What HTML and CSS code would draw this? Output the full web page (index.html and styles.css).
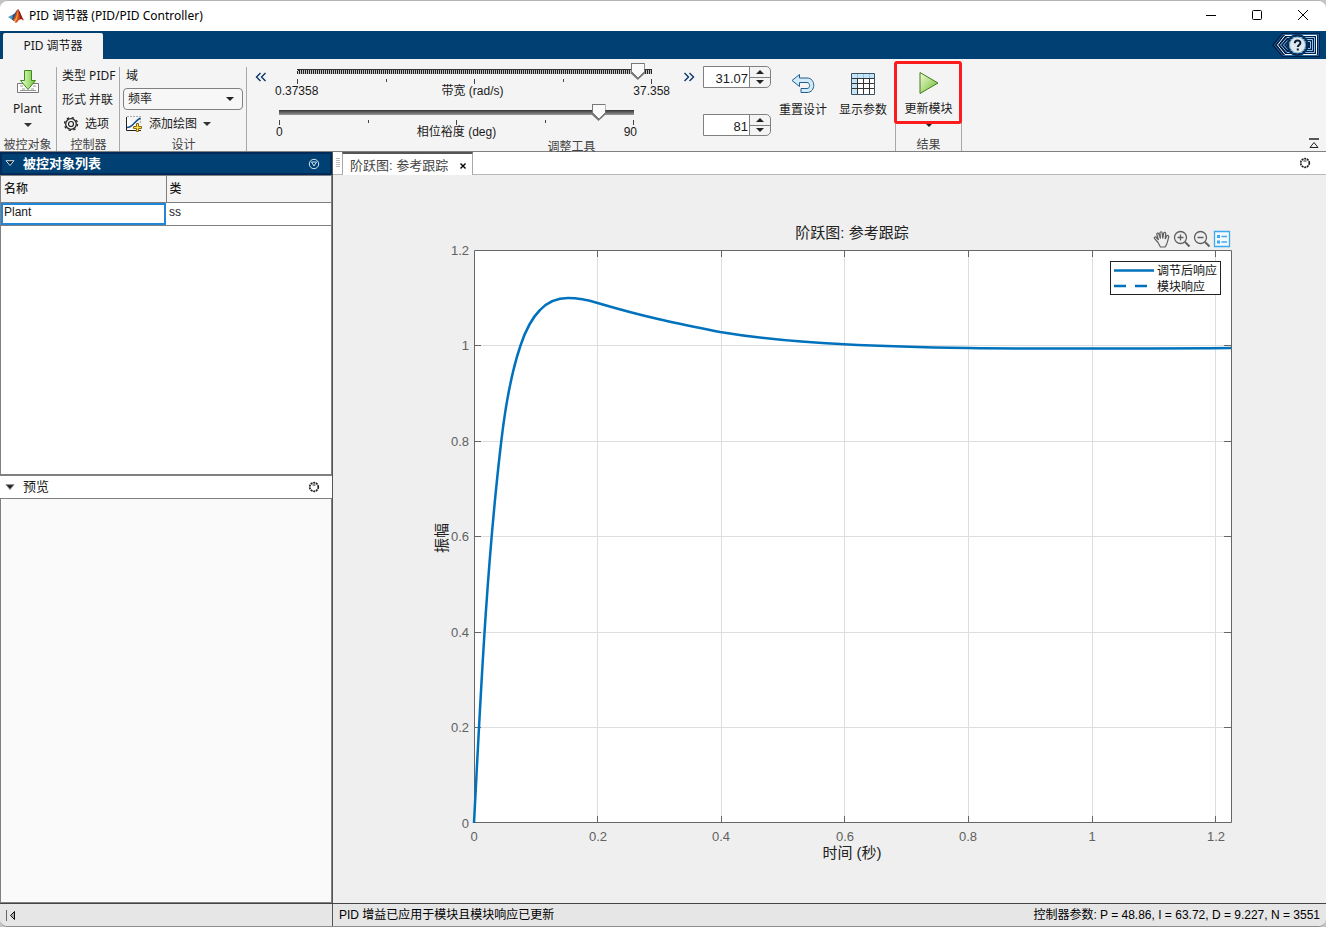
FILE: index.html
```html
<!DOCTYPE html>
<html lang="zh-CN">
<head>
<meta charset="utf-8">
<title>PID 调节器 (PID/PID Controller)</title>
<link rel="stylesheet" href="styles.css">
</head>
<body>
<div class="window">
  <header class="titlebar">
    <svg class="logo" width="16" height="16" viewBox="0 0 16 16" aria-hidden="true">
      <path d="M0 9 5 6.5 7.5 8 4.5 12z" fill="#4d9dc4"/>
      <path d="M5 6.5C7 6 8 3 9.5 1L8.5 9 5.5 13 4 11.5z" fill="#2a4f7c"/>
      <path d="M4.5 12C7 11 8 3 10 1c2 2 3.5 8 6 11.500C13.500 11 12 10.500 10.500 12.500 9.500 14 8.500 15 7.500 15 7 13 6 11.500 4.500 12z" fill="#d6501f"/>
      <path d="M10 1c2 2 3.500 8 6 11.500-2-1.500-3.500-2-4.500-.5C12 8 11 4 10 1z" fill="#8e1f14"/>
      <path d="M9.500 3c.8 4 0 8-2 11L6.500 12c2-2 2.500-6 3-9z" fill="#f5a13a"/>
    </svg>
    <h1 class="title">PID 调节器 (PID/PID Controller)</h1>
    <button class="win-btn" aria-label="最小化"><svg width="12" height="12" viewBox="0 0 12 12"><path d="M1 5.500h10" stroke="#000"/></svg></button>
    <button class="win-btn" aria-label="最大化"><svg width="12" height="12" viewBox="0 0 12 12"><rect x="1.500" y=".5" width="9" height="9" rx="1" fill="none" stroke="#000"/></svg></button>
    <button class="win-btn" aria-label="关闭"><svg width="12" height="12" viewBox="0 0 12 12"><path d="M1 0l10 10M11 0 1 10" stroke="#000"/></svg></button>
  </header>

  <nav class="tabstrip">
    <button class="ribbon-tab">PID 调节器</button>
    <button class="help" aria-label="帮助">
      <svg width="52" height="26" viewBox="0 0 52 26">
        <path d="M2 13 12 1H50V25H12z" fill="#012049"/>
        <path d="M4.500 13 13 2.500H48.500V23.500H13z" fill="none" stroke="#2b6ba5"/>
        <path d="M7.500 13 15 3.500H46.500V22.500H15z" fill="#012049" stroke="#fff"/>
        <path d="M10.500 13 17 5.500H44.500V20.500H17z" fill="none" stroke="#8fc1e8"/>
        <path d="M13.500 13 18.500 7.500H42.500V18.500H18.500z" fill="none" stroke="#8fc1e8"/>
        <path d="M16.500 13 20 9.500H40.500V16.500H20z" fill="none" stroke="#8fc1e8"/>
        <circle cx="27.500" cy="13" r="10" fill="none" stroke="#01305f" stroke-width="2"/>
        <circle cx="27.500" cy="13" r="8" fill="#dfe9f0" stroke="#7fa6c4"/>
        <path d="M24.800 11.300c0-3.800 5.600-3.600 5.600-.4 0 2-2.600 2.100-2.600 4M27.800 16.600v2" fill="none" stroke="#0b1c33" stroke-width="2"/>
      </svg>
    </button>
  </nav>

  <section class="ribbon" aria-label="工具条">
    <div class="group group-plant">
      <button class="big-btn">
        <svg class="big-icon" width="24" height="26" viewBox="0 0 24 26">
          <defs><linearGradient id="gr" x1="0" x2="1"><stop offset="0" stop-color="#f2ffe0"/><stop offset="1" stop-color="#6cc52c"/></linearGradient></defs>
          <path d="M1.500 14.500h21v9h-21z" fill="#fff" stroke="#777"/>
          <path d="M4 17h3M6 20h3M17 17h3M15 20h3M4 21.500h16" stroke="#999"/>
          <path d="M8.500 1.500h7v10h4L12 20.500 4.500 11.500h4z" fill="url(#gr)" stroke="#3f8a1d"/>
        </svg>
        <span>Plant</span>
        <svg class="caret" width="8" height="4" viewBox="0 0 8 4"><path d="M0 0h8L4 4z" fill="#333"/></svg>
      </button>
      <div class="group-label">被控对象</div>
    </div>

    <div class="group group-controller">
      <div class="rows">
        <div class="row">类型 PIDF</div>
        <div class="row">形式 并联</div>
        <button class="row row-btn">
          <svg width="16" height="16" viewBox="0 0 16 16" fill="none" stroke="#222"><circle cx="8" cy="8" r="5.300" stroke-width="1.300"/><circle cx="8" cy="8" r="2.500" stroke-width="1.200"/><circle cx="8" cy="8" r="6.500" stroke-width="1.300" stroke-dasharray="2.300 2.800"/></svg>
          <span>选项</span>
        </button>
      </div>
      <div class="group-label">控制器</div>
    </div>

    <div class="group group-design">
      <div class="rows">
        <label class="row" for="domain">域</label>
        <div class="select-wrap">
          <select id="domain"><option>频率</option></select>
          <svg class="caret" width="8" height="4" viewBox="0 0 8 4"><path d="M0 0h8L4 4z" fill="#222"/></svg>
        </div>
        <button class="row row-btn">
          <svg width="17" height="16" viewBox="0 0 17 16"><path d="M.5 1v13.500H15" fill="#fff" stroke="#222"/><path d="M1 .5h13.500V8" fill="none" stroke="#aaa" stroke-dasharray="2 1"/><path d="M1 11.500C7 11.500 8 5 14.500 2" fill="none" stroke="#15508c" stroke-width="1.500"/><path d="M10.500 7.500h2v3h3v2h-3v3h-2v-3h-3v-2h3z" fill="#ffdc4a" stroke="#8a6a08"/></svg>
          <span>添加绘图</span>
          <svg class="caret" width="8" height="4" viewBox="0 0 8 4"><path d="M0 0h8L4 4z" fill="#333"/></svg>
        </button>
      </div>
      <div class="group-label">设计</div>
    </div>

    <div class="group group-tuning">
      <div class="tuning">
        <button class="chevron" aria-label="减小范围"><svg width="12" height="10" viewBox="0 0 12 10"><path d="M5.500 1 1.500 5l4 4M10.500 1l-4 4 4 4" fill="none" stroke="#0b3568" stroke-width="1.400"/></svg></button>
        <div class="sliders">
          <div class="slider slider-bandwidth">
            <input type="range" id="bandwidth" min="0" max="100" value="96">
            <div class="ticks"><i></i><i></i><i></i><i></i><i></i></div>
            <div class="scale"><span>0.37358</span><label for="bandwidth">带宽 (rad/s)</label><span>37.358</span></div>
          </div>
          <div class="slider slider-phase">
            <input type="range" id="phase" min="0" max="90" value="81">
            <div class="ticks"><i></i><i></i><i></i><i></i><i></i></div>
            <div class="scale"><span>0</span><label for="phase">相位裕度 (deg)</label><span>90</span></div>
          </div>
        </div>
        <button class="chevron" aria-label="增大范围"><svg width="12" height="10" viewBox="0 0 12 10"><path d="M1.500 1l4 4-4 4M6.500 1l4 4-4 4" fill="none" stroke="#0b3568" stroke-width="1.400"/></svg></button>
        <div class="spinners">
          <div class="spinner">
            <input type="number" step="any" value="31.07" aria-label="带宽 (rad/s)">
            <div class="steps">
              <button aria-label="增加"><svg width="8" height="4" viewBox="0 0 8 4"><path d="M0 4h8L4 0z" fill="#222"/></svg></button>
              <button aria-label="减少"><svg width="8" height="4" viewBox="0 0 8 4"><path d="M0 0h8L4 4z" fill="#222"/></svg></button>
            </div>
          </div>
          <div class="spinner">
            <input type="number" value="81" aria-label="相位裕度 (deg)">
            <div class="steps">
              <button aria-label="增加"><svg width="8" height="4" viewBox="0 0 8 4"><path d="M0 4h8L4 0z" fill="#222"/></svg></button>
              <button aria-label="减少"><svg width="8" height="4" viewBox="0 0 8 4"><path d="M0 0h8L4 4z" fill="#222"/></svg></button>
            </div>
          </div>
        </div>
        <button class="big-btn">
          <svg class="big-icon" width="24" height="26" viewBox="0 0 24 26"><path d="M1 10.500 8.500 4.500v3.500H16c9 0 9 14.500 0 14.500h-6v-4h6c3.500 0 3.500-6 0-6H8.500v4z" fill="#d3ebf8" stroke="#1f5f8e"/></svg>
          <span>重置设计</span>
        </button>
        <button class="big-btn">
          <svg class="big-icon" width="24" height="26" viewBox="0 0 24 26"><path d="M.5 3.500h23v21H.5z" fill="#fff"/><path d="M1 4h22v4H1zM1 8h5v16H1z" fill="#c4e4f7"/><path d="M.5 8.500h23M.5 13.500h23M.5 18.500h23M6.500 8v17M12.500 8v17M18.500 8v17" fill="none" stroke="#333"/><path d="M6.500 4v4M12.500 4v4M18.500 4v4" stroke="#8cc0e0"/><path d="M.5 3.500h23v21H.5z" fill="none" stroke="#3b5262"/></svg>
          <span>显示参数</span>
        </button>
      </div>
      <div class="group-label">调整工具</div>
    </div>

    <div class="group group-result">
      <button class="big-btn">
        <svg class="big-icon" width="20" height="24" viewBox="0 0 20 24"><defs><linearGradient id="pl" x1="0" y1="0" x2="1" y2="1"><stop offset="0" stop-color="#f4ffd8"/><stop offset="1" stop-color="#69b82b"/></linearGradient></defs><path d="M1 1.500 19 12 1 22.500z" fill="url(#pl)" stroke="#447a20"/></svg>
        <span>更新模块</span>
        <svg class="caret" width="8" height="4" viewBox="0 0 8 4"><path d="M0 0h8L4 4z" fill="#222"/></svg>
      </button>
      <div class="group-label">结果</div>
      <div class="highlight"></div>
    </div>

    <button class="collapse" aria-label="收起工具条"><svg width="10" height="10" viewBox="0 0 10 10"><path d="M0 1h10" stroke="#222" stroke-width="1.500"/><path d="M5 4.500 9 9.500H1z" fill="none" stroke="#222"/></svg></button>
  </section>

  <main class="workspace">
    <aside class="sidebar">
      <section class="panel plants">
        <header class="panel-head active">
          <svg width="10" height="7" viewBox="0 0 10 7"><path d="M1 .7h8L5 5.500z" fill="#123" stroke="#bfe0f5"/></svg>
          <h2>被控对象列表</h2>
          <button aria-label="面板操作"><svg width="12" height="12" viewBox="0 0 12 12" fill="none" stroke="#d4e8f6"><circle cx="6" cy="6" r="4.700"/><path d="M3.500 4h5L6 8z"/></svg></button>
        </header>
        <div class="table-box">
          <table>
            <thead><tr><th>名称</th><th>类</th></tr></thead>
            <tbody><tr><td class="selected">Plant</td><td>ss</td></tr></tbody>
          </table>
        </div>
      </section>
      <section class="panel preview">
        <header class="panel-head">
          <svg width="10" height="7" viewBox="0 0 10 7"><path d="M1 .7h8L5 5.500z" fill="#222" stroke="#888"/></svg>
          <h2>预览</h2>
          <button aria-label="面板操作"><svg width="12" height="12" viewBox="0 0 12 12" fill="none" stroke="#222"><circle cx="6" cy="6" r="4.300" stroke-width="1.700" stroke-dasharray="2 .7"/><path d="M4.500 4h3"/></svg></button>
        </header>
        <div class="preview-box"></div>
      </section>
    </aside>

    <section class="document">
      <header class="doc-tabs">
        <div class="grip"></div>
        <div class="doc-tab">
          <button class="doc-name">阶跃图: 参考跟踪</button>
          <button class="doc-close" aria-label="关闭"><svg width="6" height="6" viewBox="0 0 6 6"><path d="M.5.5l5 5M5.500.5l-5 5" stroke="#000" stroke-width="1.400"/></svg></button>
        </div>
        <button class="doc-menu" aria-label="文档操作"><svg width="12" height="12" viewBox="0 0 12 12" fill="none" stroke="#222"><circle cx="6" cy="6" r="4.300" stroke-width="1.700" stroke-dasharray="2 .7"/><path d="M4.500 4h3"/></svg></button>
      </header>
      <div class="figure">
        <svg class="plot" viewBox="333 175 993 728" role="img" aria-label="阶跃图">
          <rect x="474" y="250" width="758" height="573" fill="#fff"/>
          <path class="grid" d="M597.500 250v573M721.500 250v573M844.500 250v573M968.500 250v573M1092.500 250v573M1215.500 250v573M474 345.500h758M474 441.500h758M474 536.500h758M474 632.500h758M474 727.500h758"/>
          <path class="axis" d="M474.500 250.500h757v572h-757zM597.500 250v7m0 559v7M721.500 250v7m0 559v7M844.500 250v7m0 559v7M968.500 250v7m0 559v7M1092.500 250v7m0 559v7M1215.500 250v7m0 559v7M474 345.500h7m743 0h7M474 441.500h7m743 0h7M474 536.500h7m743 0h7M474 632.500h7m743 0h7M474 727.500h7m743 0h7"/>
          <path class="curve" d="M474 823C480 710 486 570 501.300 441C506 401 512.500 369 520.500 345.500C527 326 533 317 540 310C548 301.500 557 298 568 298C578 298 588 300 597.600 303C618 309 636 314 658 319C679 324 700 328 720 332C750 337 795 342 844 344.300C885 346.500 925 347.500 968 348C1050 349 1150 348.500 1231 348"/>
          <g class="tick y"><text x="469" y="255">1.2</text><text x="469" y="350">1</text><text x="469" y="446">0.8</text><text x="469" y="541">0.6</text><text x="469" y="637">0.4</text><text x="469" y="732">0.2</text><text x="469" y="828">0</text></g>
          <g class="tick x"><text x="474" y="841">0</text><text x="598" y="841">0.2</text><text x="721" y="841">0.4</text><text x="845" y="841">0.6</text><text x="968" y="841">0.8</text><text x="1092" y="841">1</text><text x="1216" y="841">1.2</text></g>
          <text class="caption" x="852" y="238">阶跃图: 参考跟踪</text>
          <text class="caption" x="852" y="858">时间 (秒)</text>
          <text class="caption" transform="translate(447 538) rotate(-90)">振幅</text>
          <rect x="1110.500" y="261.500" width="110" height="33" fill="#fff" stroke="#222"/>
          <path class="curve" d="M1114 270.500h40"/>
          <path class="curve" d="M1114 286h40" stroke-dasharray="12 9"/>
          <text class="legend" x="1157" y="275">调节后响应</text>
          <text class="legend" x="1157" y="291">模块响应</text>
        </svg>
        <div class="axes-tools">
          <button aria-label="平移"><svg width="18" height="18" viewBox="0 0 18 18" fill="none" stroke="#606060" stroke-width="1.200"><path d="M5 12.500 1.500 8.500c-.8-1.500 1-2.200 2-1L5.500 10 3.800 4.500c-.3-1.600 1.500-1.900 2-.5L7.500 8.500 7 3c0-1.700 2-1.700 2.200 0l.5 5.500 1-5.300c.4-1.500 2.200-1.100 2 .4L12.200 9l1.500-3c.8-1.400 2.500-.5 2 1-1 3.500-1.500 8-3.700 10H7.500C6.500 16 6 14 5 12.500z"/></svg></button>
          <button aria-label="放大"><svg width="18" height="18" viewBox="0 0 18 18" fill="none" stroke="#606060" stroke-width="1.300"><circle cx="7.500" cy="7.500" r="6"/><path d="M4.500 7.500h6M7.500 4.500v6"/><path d="M12 12l4.500 4.500" stroke-width="2"/></svg></button>
          <button aria-label="缩小"><svg width="18" height="18" viewBox="0 0 18 18" fill="none" stroke="#606060" stroke-width="1.300"><circle cx="7.500" cy="7.500" r="6"/><path d="M4.500 7.500h6"/><path d="M12 12l4.500 4.500" stroke-width="2"/></svg></button>
          <button aria-label="图例"><svg width="18" height="18" viewBox="0 0 18 18"><path d="M1.500 1.500h15v15h-15z" fill="#f4f9fd" stroke="#3fa9f0" stroke-width="1.300"/><path d="M4 5h3v3H4zM4 10.500h3v3H4z" fill="#3fa9f0"/><path d="M8.500 6.500H14M8.500 12H14" stroke="#3fa9f0" stroke-width="1.300"/></svg></button>
        </div>
      </div>
    </section>
  </main>

  <footer class="statusbar">
    <div class="status-left"><button aria-label="折叠侧栏"><svg width="11" height="11" viewBox="0 0 11 11"><path d="M1.500 0v11" stroke="#666"/><path d="M9.500 1.500v8L5.500 5.500z" fill="#aaa" stroke="#111"/></svg></button></div>
    <div class="status-text">PID 增益已应用于模块且模块响应已更新</div>
    <div class="status-params">控制器参数: P = 48.86, I = 63.72, D = 9.227, N = 3551</div>
  </footer>
</div>
</body>
</html>
```

FILE: styles.css
```css
* { box-sizing: border-box; }
body {
  margin: 0;
  background: #c4c4c4;
  color: #1a1a1a;
  font: 12px/16px "Liberation Sans", "Noto Sans CJK SC", sans-serif;
}
button {
  margin: 0;
  padding: 0;
  border: 0;
  background: none;
  color: inherit;
  font: inherit;
}
svg { display: block; flex: none; }
h1, h2 { margin: 0; font: inherit; }

.window {
  display: flex;
  flex-direction: column;
  min-height: 100vh;
  overflow: hidden;
  border-top: 1px solid #b4b4b4;
  border-bottom: 1px solid #8c8c8c;
  border-radius: 8px;
  background: #f4f4f4;
}

/* Title bar */
.titlebar {
  display: flex;
  align-items: center;
  height: 30px;
  padding-left: 8px;
  background: #fff;
  color: #000;
}
.title {
  flex: 1;
  margin-left: 5px;
  font-family: "Noto Sans", "Noto Sans CJK SC", sans-serif;
}
.win-btn {
  display: flex;
  justify-content: center;
  width: 46px;
}

/* Tab strip */
.tabstrip {
  display: flex;
  justify-content: space-between;
  align-items: flex-end;
  height: 28px;
  padding: 0 4px 0 3px;
  background: #004073;
}
.ribbon-tab {
  width: 100px;
  height: 26px;
  border-radius: 2px 2px 0 0;
  background: #f4f4f4;
  font-family: "Noto Sans", "Noto Sans CJK SC", sans-serif;
}
.help { align-self: center; }

/* Ribbon */
.ribbon {
  display: flex;
  height: 93px;
  padding-top: 4px;
  border-bottom: 1px solid #808080;
  font-family: "Noto Sans", "Noto Sans CJK SC", sans-serif;
}
.group {
  position: relative;
  display: flex;
  flex-direction: column;
  flex: none;
}
.group::after {
  content: "";
  position: absolute;
  top: 4px;
  right: 0;
  bottom: 0;
  border-right: 1px solid #a8a8a8;
}
.group-label {
  margin-top: auto;
  height: 14px;
  line-height: 16px;
  text-align: center;
  white-space: nowrap;
  color: #444;
}
.group-plant { width: 57px; }
.group-plant > * { margin-right: 2px; }
.group-controller { width: 63px; }
.group-design { width: 127px; }
.group-result { width: 67px; margin-left: -1px; }
.group-result::before {
  content: "";
  position: absolute;
  top: 4px;
  left: 0;
  bottom: 0;
  border-left: 1px solid #a8a8a8;
}
.group-tuning { width: 649px; }
.big-btn {
  display: flex;
  flex-direction: column;
  align-items: center;
  gap: 6px;
  padding-top: 7px;
}
.group-plant .big-btn { padding-top: 6px; }
.group-result .big-btn { padding-top: 8px; }
.rows {
  display: flex;
  flex-direction: column;
}
.row {
  display: flex;
  align-items: center;
  height: 24px;
  padding-top: 2px;
  white-space: nowrap;
}
.group-controller .rows { padding-left: 5px; }
.row-btn { gap: 6px; padding-left: 1px; }
.group-design .rows { padding-left: 3px; }
.group-design .row { padding-left: 3px; }
.select-wrap {
  position: relative;
  width: 120px;
  height: 24px;
  padding-top: 1px;
}
.select-wrap select {
  width: 120px;
  height: 22px;
  padding: 0 4px;
  border: 1px solid #808080;
  border-radius: 4px;
  background: #f7f7f7;
  color: inherit;
  font: inherit;
  appearance: none;
}
.select-wrap .caret {
  position: absolute;
  top: 10px;
  right: 9px;
  pointer-events: none;
}

/* Tuning tools */
.tuning {
  display: flex;
  align-items: flex-start;
  font-family: "Liberation Sans", "Noto Sans CJK SC", sans-serif;
}
.tuning > .big-btn {
  width: 48px;
  margin-left: 8px;
  white-space: nowrap;
}
.tuning > .big-btn + .big-btn { margin-left: 12px; }
.chevron { padding: 9px 0 0 8px; }
.sliders {
  width: 408px;
  padding-left: 5px;
}
.slider { width: 369px; }
.slider-bandwidth {
  margin-left: 18px;
  padding-bottom: 6px;
}
.slider input {
  display: block;
  width: 100%;
  height: 16px;
  margin: 0;
  background: linear-gradient(#333, #999) 7px 6px / calc(100% - 14px) 5px no-repeat;
  appearance: none;
}
.slider-bandwidth input {
  background:
    linear-gradient(#333, #333) 7px 6px / calc(100% - 14px) 1px no-repeat,
    repeating-conic-gradient(#222 0 25%, #e4e4e4 0 50%) 7px 7px / 2px 2px no-repeat,
    repeating-linear-gradient(90deg, #222 0 1px, #c4c4c4 1px 2px) 7px 6px / calc(100% - 14px) 5px no-repeat;
}
.slider input::-webkit-slider-runnable-track { height: 16px; }
.slider input::-webkit-slider-thumb {
  width: 14px;
  height: 17px;
  border: 0;
  appearance: none;
  background:
    conic-gradient(from -45deg at 50% 88%, #fafafa 90deg, transparent 0) 1px 1px / 12px 15px no-repeat,
    #777;
  clip-path: polygon(0 0, 100% 0, 100% 62%, 50% 100%, 0 62%);
}
.ticks {
  display: flex;
  justify-content: space-between;
  margin: 0 7px;
  height: 5px;
}
.ticks i {
  width: 1px;
  height: 3px;
  background: #444;
}
.ticks i:nth-child(odd) { height: 5px; }
.scale {
  display: grid;
  grid-template-columns: 1fr auto 1fr;
  line-height: 14px;
  margin: 0 4px;
}
.slider-bandwidth .scale { margin: 0 -11px 0 -15px; }
.scale span:last-child { text-align: right; }
.spinners {
  display: flex;
  flex-direction: column;
  gap: 26px;
  padding: 3px 0 0 8px;
}
.spinner {
  display: flex;
  width: 68px;
  height: 22px;
  overflow: hidden;
  border: 1px solid #808080;
  border-radius: 0 5px 5px 0;
}
.spinner input {
  flex: 1;
  width: 0;
  padding: 3px 1px 0 0;
  border: 0;
  border-right: 1px solid #808080;
  background: #fff;
  color: inherit;
  font: 13px/17px "Liberation Sans", sans-serif;
  text-align: right;
  appearance: textfield;
}
.spinner input::-webkit-inner-spin-button { appearance: none; display: none; }
.steps {
  display: flex;
  flex-direction: column;
  width: 20px;
}
.steps button {
  display: flex;
  flex: 1;
  align-items: center;
  justify-content: center;
}
.steps button + button { border-top: 1px solid #808080; }
.highlight {
  position: absolute;
  z-index: 1;
  top: -2px;
  left: -1px;
  width: 68px;
  height: 63px;
  border: 3px solid #fb1d1d;
  border-radius: 3px;
  pointer-events: none;
}
.collapse {
  align-self: flex-end;
  margin: 0 7px 3px auto;
}

/* Workspace */
.workspace {
  display: flex;
  flex: 1;
}
.sidebar {
  display: flex;
  flex-direction: column;
  width: 333px;
  border-right: 1px solid #555;
}
.panel {
  display: flex;
  flex-direction: column;
}
.plants { flex: 324; }
.preview { flex: 427; }
.panel-head {
  display: flex;
  align-items: center;
  height: 22px;
  padding: 0 12px 0 5px;
  background: #fff;
}
.panel-head h2 {
  flex: 1;
  margin-left: 8px;
  font-size: 13px;
}
.panel-head.active {
  height: 23px;
  border: 2px solid #002a5a;
  padding: 0 10px 0 3px;
  background: #004073;
  color: #fff;
}
.panel-head.active h2 { font-weight: bold; }
.table-box {
  flex: 1;
  border: 1px solid #808080;
  border-bottom-width: 2px;
  background: #fff;
}
table {
  width: 100%;
  border-collapse: collapse;
  table-layout: fixed;
}
th, td {
  padding: 0 3px;
  border-bottom: 1px solid #808080;
  text-align: left;
}
th {
  height: 26px;
  background: #f4f4f4;
  font-weight: 500;
}
th + th { border-left: 1px solid #808080; }
td {
  height: 23px;
  padding-bottom: 4px;
}
td.selected { box-shadow: inset 0 0 0 2px #1f86d9; }
.preview-box {
  flex: 1;
  border: 1px solid #808080;
  background: #fafafa;
}

/* Document area */
.document {
  display: flex;
  flex: 1;
  flex-direction: column;
  min-width: 0;
}
.doc-tabs {
  display: flex;
  height: 23px;
  border-bottom: 1px solid #b8b8b8;
  background: #fff;
}
.grip {
  width: 4px;
  height: 10px;
  margin: 6px 1px 0 3px;
  background: repeating-linear-gradient(#bbb 0 1px, #fff 1px 2px);
}
.doc-tab {
  display: flex;
  align-items: center;
  gap: 12px;
  height: 23px;
  padding: 2px 6px 0 7px;
  margin-left: 1px;
  border: 1px solid #a8a8a8;
  border-top: 2px solid #555;
  border-bottom: 0;
  background: #fff;
  color: #444;
  font-size: 13px;
}
.doc-menu { margin: 0 15px 0 auto; }
.figure {
  position: relative;
  flex: 1;
  background: #efefef;
}
.plot {
  width: 100%;
  height: auto;
}
.grid { fill: none; stroke: #dedede; }
.axis { fill: none; stroke: #666; }
.curve {
  fill: none;
  stroke: #0072bd;
  stroke-width: 2.5;
}
.tick {
  fill: #616161;
  font-size: 13px;
}
.tick.x { text-anchor: middle; }
.tick.y { text-anchor: end; }
.caption {
  fill: #222;
  font-size: 15px;
  text-anchor: middle;
}
.legend {
  fill: #111;
  font-size: 12px;
}
.axes-tools {
  position: absolute;
  top: 55px;
  right: 95px;
  display: flex;
  gap: 2px;
}

/* Status bar */
.statusbar {
  display: flex;
  align-items: center;
  height: 23px;
  border-top: 1px solid #444;
  background: #e6e6e6;
  color: #000;
}
.status-left {
  display: flex;
  align-items: center;
  align-self: stretch;
  width: 333px;
  padding-left: 5px;
  border-right: 1px solid #555;
}
.status-text {
  flex: 1;
  padding-left: 6px;
}
.status-params { padding-right: 6px; }
```
